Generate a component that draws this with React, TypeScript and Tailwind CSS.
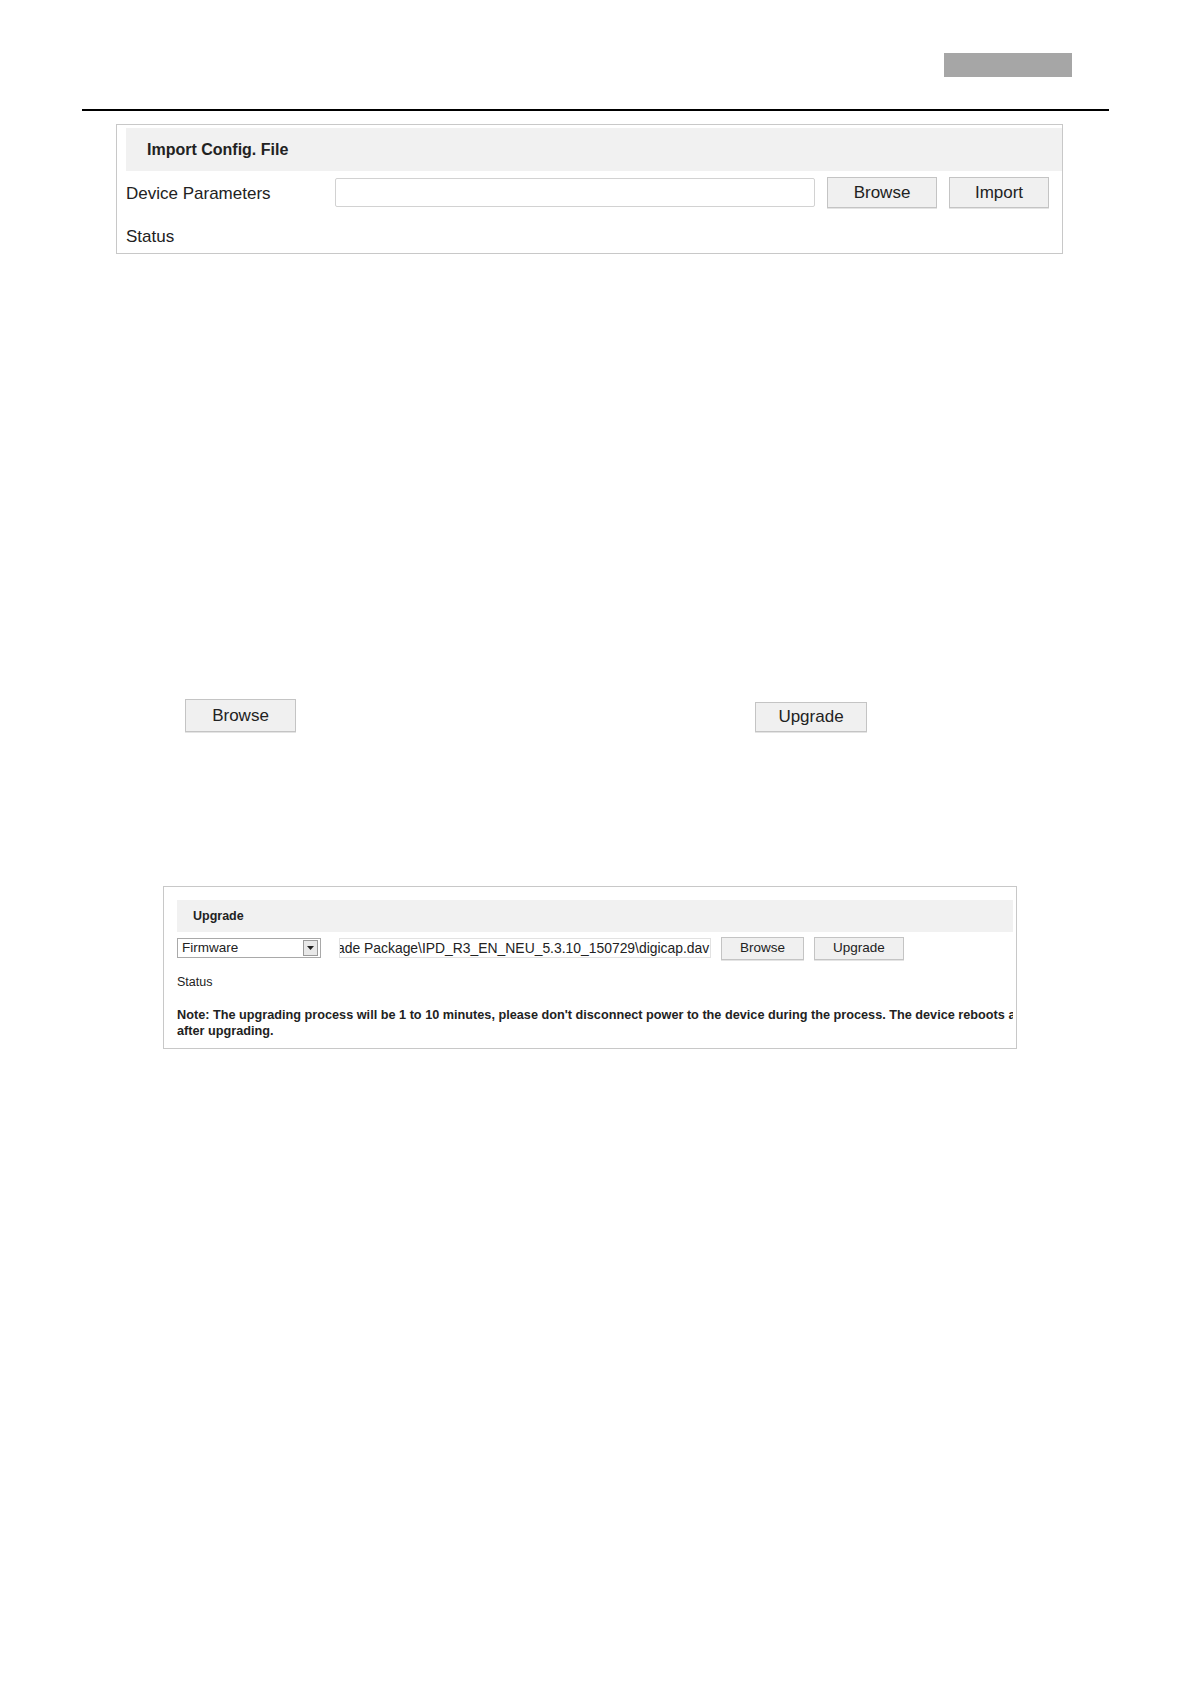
import type { ReactNode } from 'react';

// Flat grey button used throughout the config pages
function Btn({ children, className = '' }: { children: ReactNode; className?: string }) {
	return (
		<div
			className={`flex items-center justify-center border border-[#c4c4c4] bg-[#f0f0f0] text-[#222] shadow-[0_1px_0_#e4e4e4] ${className}`}>
			{children}
		</div>
	);
}

export default function App() {
	return (
		<div className="relative min-h-[1684px] w-[1191px] bg-white font-['Liberation_Sans',Arial,sans-serif] text-[#222]">
			{/* page header tab + rule */}
			<div className="flex justify-end pt-[53px] pr-[119px]">
				<div className="h-[24px] w-[128px] bg-[#a6a6a6]" />
			</div>
			<div className="mt-[32px] ml-[82px] h-[2px] w-[1027px] bg-black" />

			{/* Import Config. File panel */}
			<div className="mt-[13px] ml-[116px] flex h-[130px] w-[947px] flex-col border border-[#c8c8c8] pl-[9px]">
				<div className="mt-[3px] flex h-[43px] items-center bg-[#f1f1f1] pl-[21px] text-[16px] font-bold">
					Import Config. File
				</div>
				<div className="mt-[6px] flex h-[31px] items-center">
					<span className="mt-[3px] w-[209px] text-[17px]">Device Parameters</span>
					<div className="h-[29px] w-[480px] rounded-[2px] border border-[#d2d2d2] bg-white" />
					<Btn className="ml-[12px] h-[31px] w-[110px] text-[17px]">Browse</Btn>
					<Btn className="ml-[12px] h-[31px] w-[100px] text-[17px]">Import</Btn>
				</div>
				<div className="mt-[19px] text-[17px] leading-[20px]">Status</div>
			</div>

			{/* standalone buttons */}
			<div className="mt-[445px] flex items-end">
				<Btn className="ml-[185px] h-[33px] w-[111px] text-[17px]">Browse</Btn>
				<Btn className="ml-[459px] h-[30px] w-[112px] text-[17px]">Upgrade</Btn>
			</div>

			{/* Upgrade panel screenshot */}
			<div className="mt-[154px] ml-[163px] flex h-[163px] w-[854px] flex-col overflow-hidden border border-[#c8c8c8] pl-[13px] pr-[3px]">
				<div className="mt-[13px] flex h-[32px] items-center bg-[#f1f1f1] pl-[16px] text-[12.5px] font-bold">
					Upgrade
				</div>
				<div className="mt-[4px] flex h-[24px] items-center">
					<div className="flex h-[20px] w-[144px] items-center justify-between border border-[#a9a9a9] bg-white pl-[4px] pr-[2px] text-[13.5px]">
						<span>Firmware</span>
						<span className="flex h-[16px] w-[15px] items-center justify-center border border-[#9a9a9a] bg-[#e8e8e8]">
							<svg width="7" height="4" viewBox="0 0 7 4">
								<path d="M0 0h7L3.5 4z" fill="#222" />
							</svg>
						</span>
					</div>
					<div className="ml-[18px] flex h-[20px] w-[372px] items-center overflow-hidden whitespace-nowrap border border-[#e2e2e2] text-[13.9px]">
						<span className="-ml-[3px]">ade Package\IPD_R3_EN_NEU_5.3.10_150729\digicap.dav</span>
					</div>
					<Btn className="ml-[10px] h-[23px] w-[83px] text-[13.5px]">Browse</Btn>
					<Btn className="ml-[10px] h-[23px] w-[90px] text-[13.5px]">Upgrade</Btn>
				</div>
				<div className="mt-[14px] text-[12.5px] leading-[16px]">Status</div>
				<div className="mt-[17px] text-[12.7px] font-bold leading-[16px]">
					<div className="overflow-hidden whitespace-nowrap">
						Note: The upgrading process will be 1 to 10 minutes, please don't disconnect power to the device during the process. The device reboots automatically
					</div>
					<div>after upgrading.</div>
				</div>
			</div>
		</div>
	);
}
